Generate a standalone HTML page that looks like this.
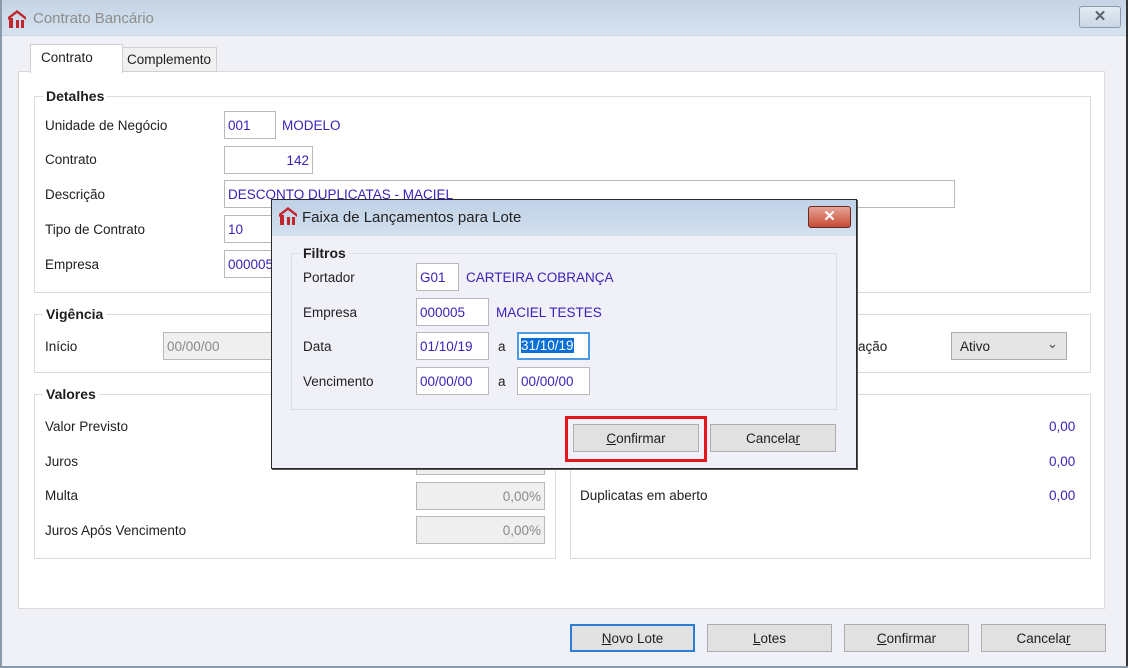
<!DOCTYPE html>
<html><head><meta charset="utf-8"><style>
*{box-sizing:border-box;margin:0;padding:0}
body{width:1128px;height:668px;overflow:hidden;font-family:"Liberation Sans",sans-serif;font-size:13.5px;color:#1e1e1e;background:#f0f1f6;position:relative}
.a{position:absolute;white-space:nowrap}
.in{position:absolute;background:#fff;border:1px solid #b9b9b9;color:#3a22b8;padding:6px 3px 0;height:28px}
.dis{background:#efefef;color:#8a8a8a}
.grp{position:absolute;border:1px solid #dcdcdc}
.gt{position:absolute;top:-9px;left:8px;background:#fff;font-weight:bold;padding:0 3px;font-size:14px}
.btn{position:absolute;height:28px;border:1px solid #adadad;background:#e1e1e1;text-align:center;padding-top:6px}
.blue{color:#3a22b8}
u{text-decoration:underline}
</style></head><body>
<div class="a" style="left:0;top:0;width:1128px;height:36px;background:linear-gradient(#c5d4e5,#d5e2ef);border-bottom:1px solid #c8d4e0"></div>
<svg class="a" style="left:7px;top:9px" width="20" height="20" viewBox="0 0 20 20"><path d="M1 8 L10 1 L19 8 L19 11 L10 4 L1 11Z" fill="#c0262c"/><rect x="2" y="9" width="4" height="10" fill="#c0262c"/><rect x="9" y="11" width="3" height="8" fill="#c0262c"/><rect x="14" y="11" width="3" height="8" fill="#c0262c"/></svg>
<div class="a" style="left:33px;top:10px;font-size:15px;color:#8d8d8d">Contrato Bancário</div>
<div class="a" style="left:1079px;top:6px;width:42px;height:22px;border:1px solid #8a9aab;border-radius:3px;background:linear-gradient(#e4ebf3,#c9d6e4);text-align:center;font-weight:bold;color:#5a6470;font-size:15px;line-height:20px">✕</div>
<div class="a" style="left:0;top:0;width:2px;height:668px;background:#8a9aab"></div>
<div class="a" style="left:1126px;top:0;width:2px;height:668px;background:#333"></div>
<div class="a" style="left:0;top:666px;width:1128px;height:2px;background:#8a9aab"></div>

<div class="a" style="left:18px;top:71px;width:1087px;height:538px;background:#fff;border:1px solid #dadada"></div>
<div class="a" style="left:122px;top:47px;width:95px;height:25px;background:#f0f0f0;border:1px solid #d0d0d0;padding:4px 0 0 4px">Complemento</div>
<div class="a" style="left:30px;top:44px;width:93px;height:29px;background:#fff;border:1px solid #d0d0d0;border-bottom:none;padding:5px 0 0 10px">Contrato</div>

<div class="grp" style="left:34px;top:96px;width:1057px;height:197px"><div class="gt">Detalhes</div></div>
<div class="a" style="left:45px;top:118px">Unidade de Negócio</div>
<div class="in" style="left:224px;top:111px;width:52px">001</div>
<div class="a blue" style="left:282px;top:118px">MODELO</div>
<div class="a" style="left:45px;top:152px">Contrato</div>
<div class="in" style="left:224px;top:146px;width:89px;text-align:right">142</div>
<div class="a" style="left:45px;top:187px">Descrição</div>
<div class="in" style="left:224px;top:180px;width:731px">DESCONTO DUPLICATAS - MACIEL</div>
<div class="a" style="left:45px;top:222px">Tipo de Contrato</div>
<div class="in" style="left:224px;top:215px;width:60px">10</div>
<div class="a" style="left:45px;top:257px">Empresa</div>
<div class="in" style="left:224px;top:250px;width:60px">000005</div>

<div class="grp" style="left:34px;top:314px;width:1057px;height:59px"><div class="gt">Vigência</div></div>
<div class="a" style="left:45px;top:339px">Início</div>
<div class="in dis" style="left:163px;top:332px;width:120px">00/00/00</div>
<div class="a" style="left:858px;top:339px">ação</div>
<div class="a" style="left:951px;top:332px;width:116px;height:28px;background:#e5e5e5;border:1px solid #acacac;padding:6px 0 0 8px">Ativo<span style="position:absolute;right:8px;top:3px;color:#555">⌄</span></div>

<div class="grp" style="left:34px;top:394px;width:522px;height:165px"><div class="gt">Valores</div></div>
<div class="grp" style="left:570px;top:394px;width:521px;height:165px"></div>
<div class="a" style="left:45px;top:419px">Valor Previsto</div>
<div class="a" style="left:45px;top:454px">Juros</div>
<div class="in dis" style="left:416px;top:447px;width:129px"></div>
<div class="a" style="left:45px;top:488px">Multa</div>
<div class="in dis" style="left:416px;top:482px;width:129px;text-align:right">0,00%</div>
<div class="a" style="left:45px;top:523px">Juros Após Vencimento</div>
<div class="in dis" style="left:416px;top:516px;width:129px;text-align:right">0,00%</div>
<div class="a blue" style="left:1049px;top:419px">0,00</div>
<div class="a blue" style="left:1049px;top:454px">0,00</div>
<div class="a" style="left:580px;top:488px">Duplicatas em aberto</div>
<div class="a blue" style="left:1049px;top:488px">0,00</div>

<div class="btn" style="left:570px;top:624px;width:125px;border:2px solid #2a7fd4;padding-top:5px"><u>N</u>ovo Lote</div>
<div class="btn" style="left:707px;top:624px;width:125px"><u>L</u>otes</div>
<div class="btn" style="left:844px;top:624px;width:125px"><u>C</u>onfirmar</div>
<div class="btn" style="left:981px;top:624px;width:125px">Cancela<u>r</u></div>

<!-- dialog -->
<div class="a" style="left:271px;top:199px;width:586px;height:270px;background:#f0f1f8;border:1px solid #2a2a2a;box-shadow:1px 1px 0 #555"></div>
<div class="a" style="left:272px;top:200px;width:584px;height:36px;background:linear-gradient(#bfd1e6,#d3e1ef)"></div>
<svg class="a" style="left:278px;top:206px" width="20" height="20" viewBox="0 0 20 20"><path d="M1 8 L10 1 L19 8 L19 11 L10 4 L1 11Z" fill="#c0262c"/><rect x="2" y="9" width="4" height="10" fill="#c0262c"/><rect x="9" y="11" width="3" height="8" fill="#c0262c"/><rect x="14" y="11" width="3" height="8" fill="#c0262c"/></svg>
<div class="a" style="left:302px;top:209px;font-size:15px;color:#222">Faixa de Lançamentos para Lote</div>
<div class="a" style="left:808px;top:206px;width:43px;height:22px;border:1px solid #6b2a20;border-radius:3px;background:linear-gradient(#e6a597,#c74b35);text-align:center;color:#fff;font-weight:bold;font-size:15px;line-height:20px">✕</div>
<div class="grp" style="left:291px;top:253px;width:546px;height:157px;border-color:#dcdde3"><div class="gt" style="background:#f0f1f8">Filtros</div></div>
<div class="a" style="left:303px;top:270px">Portador</div>
<div class="in" style="left:416px;top:263px;width:43px">G01</div>
<div class="a blue" style="left:466px;top:270px">CARTEIRA COBRANÇA</div>
<div class="a" style="left:303px;top:305px">Empresa</div>
<div class="in" style="left:416px;top:298px;width:73px">000005</div>
<div class="a blue" style="left:496px;top:305px">MACIEL TESTES</div>
<div class="a" style="left:303px;top:339px">Data</div>
<div class="in" style="left:416px;top:332px;width:73px">01/10/19</div>
<div class="a" style="left:498px;top:339px">a</div>
<div class="in" style="left:517px;top:332px;width:73px;border:2px solid #4a9be4;padding:4px 2px 0"><span style="background:#0a6fd6;color:#fff">31/10/19</span></div>
<div class="a" style="left:303px;top:374px">Vencimento</div>
<div class="in" style="left:416px;top:367px;width:73px">00/00/00</div>
<div class="a" style="left:498px;top:374px">a</div>
<div class="in" style="left:517px;top:367px;width:73px">00/00/00</div>
<div class="a" style="left:565px;top:416px;width:142px;height:46px;border:3px solid #e8141c"></div>
<div class="btn" style="left:573px;top:424px;width:126px"><u>C</u>onfirmar</div>
<div class="btn" style="left:710px;top:424px;width:126px">Cancela<u>r</u></div>
</body></html>
